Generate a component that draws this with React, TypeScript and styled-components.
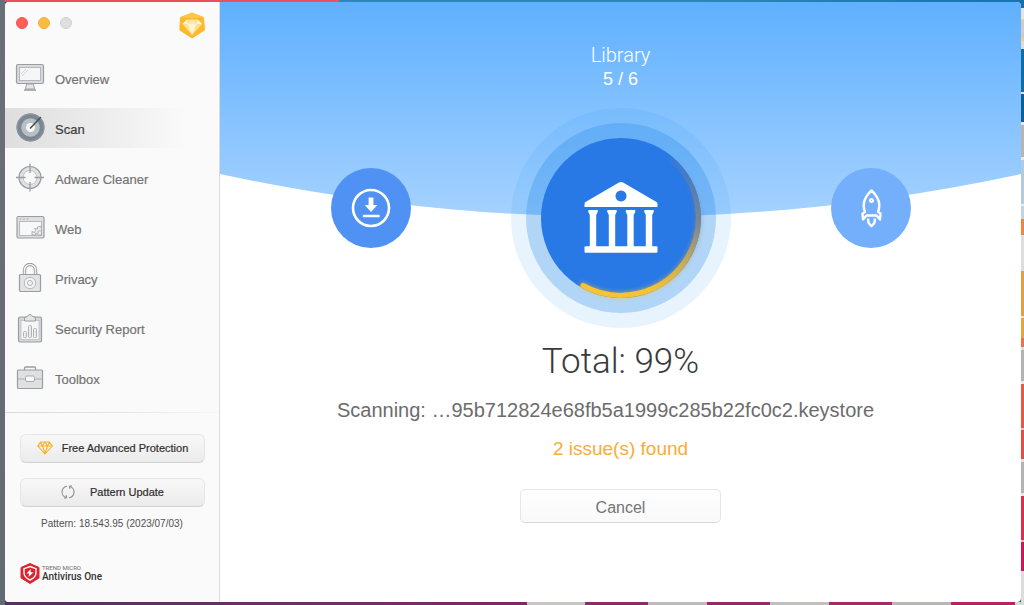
import React from "react";
import styled, { createGlobalStyle } from "styled-components";

const GlobalStyle = createGlobalStyle`
  *, *::before, *::after { box-sizing: border-box; }
  body { margin: 0; font-family: "Liberation Sans", Arial, sans-serif; }
  button { font-family: inherit; cursor: pointer; }
`;

const light = `font-family: Roboto, "Liberation Sans", sans-serif; font-weight: 300;`;

const Desktop = styled.div`
  min-height: 100vh;
  display: flex;
  padding: 2px 3px 3px 5px;
  background:
    linear-gradient(180deg,
      #0f72ad 0 8px, #e6e3e2 8px 19px, #f0cf7a 19px 21px, #cfcbca 21px 38px, #f0cf7a 38px 41px, #dedad9 41px 49px,
      #0f6ca5 49px 92px, #dce6ee 92px 94px, #0b5f98 94px 122px, #e8e8e8 122px 125px, #b7b4b2 125px 157px,
      #e8e8e8 157px 160px, #b5cadc 160px 204px, #e8eef2 204px 206px, #c4d3de 206px 219px, #e58a45 219px 235px,
      #dddddd 235px 271px, #e0a043 271px 316px, #f1e2c4 316px 318px, #e2a63e 318px 338px, #e8744a 338px 347px,
      #dedede 347px 350px, #b4b3b3 350px 381px, #e6e6e6 381px 384px, #e65a44 384px 428px, #f0c3bd 428px 430px,
      #e34e45 430px 459px, #e2e2e2 459px 462px, #b4b3b3 462px 493px, #e6e6e6 493px 496px, #dd2f4b 496px 540px,
      #efb9c9 540px 542px, #d01455 542px 571px, #dcdcdc 571px) right top / 3px 100% no-repeat,
    linear-gradient(180deg, #6a707a, #626a76) left top / 5px 100% no-repeat,
    linear-gradient(90deg, #ea4f5d 0 339px, #2f86b9 339px 700px, #1674ae 1000px) left top / 100% 2px no-repeat,
    linear-gradient(90deg,
      #563064 0, #6f2d6c 300px, #7d2a6b 527px, #c9c4c4 527px 585px, #8f2a68 585px 648px, #bcbaba 648px 707px,
      #97296a 707px 770px, #c2bfbf 770px 829px, #a82868 829px 892px, #b9b6b6 892px 951px, #b8245f 951px 1015px,
      #d8d8d8 1015px) left bottom / 100% 3px no-repeat,
    #563064;
`;

const AppWindow = styled.div`
  flex: 1;
  display: flex;
  min-width: 0;
  border-radius: 4px;
  overflow: hidden;
  background: #ffffff;
`;

const Sidebar = styled.aside`
  flex: 0 0 215px;
  display: flex;
  flex-direction: column;
  background: #fafafa;
  border-right: 1px solid #dcdcdc;
`;

const TitleBar = styled.header`
  display: flex;
  align-items: flex-start;
  justify-content: space-between;
  padding: 10px 14px 0 11px;
  height: 56px;
`;

const Lights = styled.div`
  display: flex;
  gap: 10px;
  padding-top: 5px;
`;

const Light = styled.button<{ $fill: string; $edge: string }>`
  width: 12px;
  height: 12px;
  padding: 0;
  border: 1px solid ${(p) => p.$edge};
  border-radius: 50%;
  background: ${(p) => p.$fill};
`;

const PlainButton = styled.button`
  display: flex;
  padding: 0;
  border: 0;
  background: none;
`;

const Nav = styled.nav`
  display: flex;
  flex-direction: column;
  gap: 10px;
`;

const NavItem = styled.a<{ $active?: boolean }>`
  display: flex;
  align-items: center;
  gap: 10px;
  height: 40px;
  padding-left: 10px;
  font-size: 13px;
  line-height: 16px;
  text-decoration: none;
  color: ${(p) => (p.$active ? "#3c3c3c" : "#747474")};
  background: ${(p) => (p.$active ? "linear-gradient(90deg, #dedede, #ececec 45%, #fafafa 85%)" : "none")};
`;

const NavLabel = styled.span`
  padding-top: 4px;
  -webkit-text-stroke: 0.2px currentColor;
`;

const Divider = styled.hr`
  width: 100%;
  height: 1px;
  margin: 14px 0 21px;
  border: 0;
  background: linear-gradient(90deg, #d8d8d8, #e6e6e6 60%, #f6f6f6);
`;

const SideActions = styled.div`
  display: flex;
  flex-direction: column;
  gap: 15px;
  padding: 0 14px 0 15px;
`;

const SideButton = styled.button<{ $gap: number }>`
  display: flex;
  align-items: center;
  justify-content: center;
  gap: ${(p) => p.$gap}px;
  height: 29px;
  padding: 0 0 2px;
  border: 1px solid #e6e6e6;
  border-bottom-color: #d2d2d2;
  border-radius: 6px;
  background: linear-gradient(180deg, #f8f8f8, #ebebeb);
  font-size: 11px;
  color: #2f2f2f;
  -webkit-text-stroke: 0.2px currentColor;
`;

const PatternInfo = styled.p`
  margin: 10px 0 0;
  text-align: center;
  font-size: 10px;
  line-height: 14px;
  color: #505050;
`;

const Brand = styled.div`
  display: flex;
  align-items: center;
  gap: 2px;
  padding: 32px 0 0 15px;
`;

const BrandText = styled.div`
  display: flex;
  flex-direction: column;
  font-family: Roboto, sans-serif;
`;

const BrandSmall = styled.span`
  font-size: 6px;
  line-height: 6px;
  color: #6c6c6c;
`;

const BrandName = styled.span`
  font-size: 10px;
  line-height: 12px;
  font-weight: 500;
  color: #333333;
`;

const Main = styled.main`
  flex: 1;
  min-width: 0;
  display: grid;
  grid-template-columns: minmax(0, 1fr);
  grid-template-rows: 1fr;
`;

const Wave = styled.svg`
  grid-area: 1 / 1;
  display: block;
  width: 100%;
  height: 216px;
`;

const Content = styled.div`
  grid-area: 1 / 1;
  z-index: 1;
  display: flex;
  flex-direction: column;
  align-items: center;
  padding-top: 40px;
`;

const Stage = styled.h1`
  ${light}
  margin: 0;
  font-size: 20px;
  line-height: 26px;
  color: #ffffff;
`;

const Step = styled.p`
  margin: 0;
  font-size: 18px;
  line-height: 22px;
  color: #ffffff;
`;

const StageRow = styled.div`
  display: flex;
  align-items: center;
  gap: 100px;
  margin-top: 18px;
`;

const SideStage = styled.svg`
  display: block;
  flex: none;
  width: 80px;
  height: 80px;
  margin-bottom: 20px;
`;

const Ring = styled.svg`
  display: block;
  flex: none;
  width: 220px;
  height: 220px;
`;

const Total = styled.h2`
  ${light}
  margin: 12px 0 0;
  font-size: 35px;
  line-height: 44px;
  color: #3a3a3a;
`;

const Scanning = styled.p`
  margin: 14px 0 0;
  padding-right: 30px;
  font-size: 20px;
  line-height: 24px;
  color: #6c6c6c;
`;

const Issues = styled.p`
  margin: 15px 0 0;
  font-size: 19px;
  line-height: 24px;
  color: #f7ad36;
`;

const CancelButton = styled.button`
  width: 201px;
  height: 34px;
  margin-top: 28px;
  padding: 3px 0 0;
  border: 1px solid #e6e6e6;
  border-bottom-color: #d8d8d8;
  border-radius: 5px;
  background: linear-gradient(180deg, #fefefe, #f9f9f9);
  font-size: 16px;
  color: #747474;
`;

const NavSvg = ({ children }: { children: React.ReactNode }) => (
  <svg width="30" height="30" viewBox="0 0 30 30" fill="none" stroke="#9a9da1" strokeWidth="1" aria-hidden="true">
    {children}
  </svg>
);

const OverviewIcon = () => (
  <NavSvg>
    <path d="M11.500 21h7l1 5h-9z" fill="#e4e4e6" stroke="#a2a4a8" />
    <path d="M9 27h12" strokeWidth="1.300" />
    <rect x="1.500" y="1.500" width="27" height="19" rx="1.500" fill="#d9dadd" strokeWidth="1.200" />
    <rect x="4.500" y="4.500" width="21" height="13" fill="#f6f6f6" stroke="#b4b6b9" />
    <path d="M6 11l5-5M7 13l6-6" stroke="#c4c6c8" strokeWidth="0.700" />
  </NavSvg>
);

const ScanIcon = () => (
  <NavSvg>
    <circle cx="15.500" cy="14.500" r="14" fill="#7d8791" stroke="none" />
    <circle cx="15.500" cy="14.500" r="13.300" stroke="#8b959e" strokeWidth="1.200" />
    <circle cx="15.500" cy="14.500" r="9.300" fill="#b8c0c6" stroke="none" />
    <circle cx="15.500" cy="14.500" r="4.500" fill="#f8f8f8" stroke="none" />
    <path d="M15.500 15L25.500 4.500" stroke="#47515b" strokeWidth="1.600" strokeLinecap="round" />
  </NavSvg>
);

const AdwareIcon = () => (
  <NavSvg>
    <circle cx="15" cy="14.500" r="9" stroke="#e0e1e4" strokeWidth="4" />
    <circle cx="15" cy="14.500" r="11" strokeWidth="1.200" />
    <circle cx="15" cy="14.500" r="7" fill="#f8f8f8" stroke="#b3b5b8" strokeWidth="0.800" />
    <path d="M15 .5v9.500M15 19v9.500M1 14.500h9.500M19.500 14.500h9.500" strokeWidth="1.300" />
  </NavSvg>
);

const WebIcon = () => (
  <NavSvg>
    <rect x="2" y="3.500" width="27" height="21.500" rx="1.500" fill="#dedfe1" strokeWidth="1.200" />
    <path d="M4.500 6h2M8 6h2M11.500 6h2" stroke="#a9abae" />
    <rect x="4.500" y="8.500" width="22" height="14" fill="#f8f8f8" stroke="#b4b6b9" strokeWidth="0.900" />
    <path d="M17 22v-3.500l2.500 1 1-2-1-2 3 .5v-2l3-1 1 3v6z" fill="#ececee" stroke="#a9abae" strokeWidth="0.900" />
    <path d="M20.500 22v-2l2.500.5v-2.500h3" stroke="#b4b6b9" strokeWidth="0.900" />
  </NavSvg>
);

const PrivacyIcon = () => (
  <NavSvg>
    <path d="M9.500 12V7a5.500 5.500 0 0 1 11 0V12" stroke="#93969a" strokeWidth="3.400" />
    <path d="M9.500 12V7a5.500 5.500 0 0 1 11 0V12" stroke="#f0f0f1" strokeWidth="1.600" />
    <rect x="4.500" y="11.500" width="21" height="17" rx="1" fill="#e2e3e5" strokeWidth="1.200" />
    <circle cx="15" cy="20" r="5.700" fill="#f4f4f4" stroke="#b6b8bb" />
    <circle cx="15" cy="20" r="2.500" stroke="#b0b2b5" />
  </NavSvg>
);

const ReportIcon = () => (
  <NavSvg>
    <rect x="3.500" y="4" width="23" height="25" rx="1.500" fill="#d6d7da" strokeWidth="1.200" />
    <rect x="6" y="7.500" width="18" height="19" fill="#f6f6f6" stroke="#b8babd" strokeWidth="0.700" />
    <path d="M9.500 8V4.500L12.500 3.500a2.600 2.600 0 0 1 5 0l3 1V8z" fill="#e4e4e6" />
    <rect x="8.500" y="18.500" width="3" height="6" rx="1" fill="#ececed" stroke="#b0b2b5" />
    <rect x="13.500" y="12.500" width="3" height="12" rx="1" fill="#ececed" stroke="#b0b2b5" />
    <rect x="18.500" y="15.500" width="3" height="9" rx="1" fill="#ececed" stroke="#b0b2b5" />
  </NavSvg>
);

const ToolboxIcon = () => (
  <NavSvg>
    <path d="M9.500 8V5a1 1 0 0 1 1-1h9a1 1 0 0 1 1 1V8" strokeWidth="1.300" />
    <rect x="2.500" y="7" width="25" height="18.500" rx="1" fill="#dfe0e2" strokeWidth="1.200" />
    <path d="M3 16h24" stroke="#aeb0b3" />
    <rect x="10.500" y="13" width="9" height="5.500" rx="1.500" fill="#f8f8f8" stroke="#a9abae" />
  </NavSvg>
);

const GemBadge = () => (
  <svg width="26" height="27" viewBox="0 0 26 27" aria-hidden="true">
    <path d="M13 1L24.500 5.500L25.500 18L13 26L.8 18L1.500 5.500z" fill="#fdb92c" stroke="#fdb92c" strokeLinejoin="round" />
    <path d="M1.500 5.500L13 1L24.500 5.500L13 6z" fill="#fdc846" />
    <path d="M8 7.500h10.500l4.500 4.500L13 23L3.500 12z" fill="#fee08f" />
    <path d="M8.500 12h9L13 23z" fill="#fff4d2" />
    <path d="M8 7.500L3.500 12h5zM18.500 7.500L23 12h-5.500z" fill="#fff7e0" />
    <path d="M8.500 12l4.500-4.500L17.500 12z" fill="#ffe9ae" />
  </svg>
);

const DiamondIcon = () => (
  <svg width="16" height="14" viewBox="0 0 16 14" fill="none" stroke="#f8b02b" strokeWidth="1.100" strokeLinejoin="round" aria-hidden="true">
    <path d="M3.500 1h9L15.300 5L8 13L.7 5zM.7 5h14.600M3.500 1l2 4L8 13l2.500-8 2-4M5.500 5L8 1l2.500 4" />
  </svg>
);

const RefreshIcon = () => (
  <svg width="14" height="14" viewBox="0 0 14 14" fill="none" stroke="#8f8f8f" strokeWidth="1.100" aria-hidden="true">
    <path d="M5.300 12.600A5.800 5.800 0 0 1 7 1.200l1.500.2M8.700 1.400A5.800 5.800 0 0 1 7 12.800" strokeDasharray="15.500 20" />
    <path d="M3.300 13.200l2.300-.6-.6-2.400M10.700 .8l-2.300.6.600 2.400" />
  </svg>
);

const ShieldLogo = () => (
  <svg width="20" height="21" viewBox="0 0 20 21" aria-hidden="true">
    <path d="M10 .5L19 4.500V15L10 20.500L1 15V4.500z" fill="#dc2430" stroke="#dc2430" strokeLinejoin="round" />
    <path d="M10 3.500l6 2.200v3.800c0 3.600-2.500 6-6 7.500-3.500-1.500-6-3.900-6-7.500V5.700z" fill="none" stroke="#fff" strokeWidth="1.400" />
    <path d="M10.800 6L6.500 10.500h2.700L8.500 14l5-4.800h-2.900z" fill="#fff" />
  </svg>
);

const LibraryRing = () => (
  <Ring viewBox="-110 -110 220 220" role="img" aria-label="Library scan progress">
    <defs>
      <linearGradient id="arc" gradientUnits="userSpaceOnUse" x1="60" y1="-64" x2="20" y2="70">
        <stop offset="0" stopColor="#7d7f80" stopOpacity="0" />
        <stop offset="0.450" stopColor="#85898a" stopOpacity="0.850" />
        <stop offset="0.750" stopColor="#cfac55" />
        <stop offset="1" stopColor="#f7c331" />
      </linearGradient>
      <filter id="glow" x="-20%" y="-20%" width="140%" height="140%">
        <feGaussianBlur stdDeviation="2" />
      </filter>
    </defs>
    <circle r="110" fill="#2290ee" fillOpacity="0.100" />
    <circle r="95" fill="#2084e8" fillOpacity="0.280" />
    <circle r="80" fill="#2879e6" />
    <g fill="none" stroke="url(#arc)" strokeLinecap="round">
      <path d="M49.500 -59.600A77.500 77.500 0 0 1 -38 67.500" strokeWidth="6" filter="url(#glow)" opacity="0.600" />
      <path d="M49.500 -59.600A77.500 77.500 0 0 1 -38 67.500" strokeWidth="5" />
    </g>
    <g fill="#fff">
      <path
        fillRule="evenodd"
        d="M-2.500 -35.300Q0 -36.500 2.500 -35.300L35.500 -16Q36.500 -15.300 36.500 -14V-11H-36.500V-14Q-36.500 -15.300 -35.500 -16zM0 -27.500a5.500 5.500 0 1 0 .01 0z"
      />
      {[-28, -9, 9.5, 28].map((x) => (
        <path key={x} transform={`translate(${x} 0)`} d="M-4.700 -8H4.700V-6L3.200 -3V29H-3.200V-3L-4.700 -6z" />
      ))}
      <rect x="-36.500" y="28.300" width="73" height="6.500" rx="1" />
    </g>
  </Ring>
);

const DownloadStage = () => (
  <SideStage viewBox="-40 -40 80 80" role="img" aria-label="Downloads">
    <circle r="40" fill="#4f92f3" />
    <circle r="18" fill="none" stroke="#fff" strokeWidth="2.600" />
    <path d="M-2.400 -10.500H2.400V-3H6.300L0 4L-6.300 -3H-2.400z" fill="#fff" />
    <path d="M-7 8H7.500" stroke="#fff" strokeWidth="2.600" strokeLinecap="round" />
  </SideStage>
);

const RocketStage = () => (
  <SideStage viewBox="-40 -40 80 80" role="img" aria-label="Startup">
    <circle r="40" fill="#73affa" />
    <g fill="none" stroke="#fff" strokeWidth="2.400" strokeLinejoin="round">
      <path d="M0.500 -17.500C-5 -12.500 -7.500 -7 -7.300 -2C-7.200 1 -6.500 2.500 -6 4L-8.500 5.500L-8 11.500L-4.500 7.500H5.500L9 11.500L9.500 5.500L7 4C7.500 2.500 8.200 1 8.300 -2C8.500 -7 6 -12.500 0.500 -17.500z" />
      <circle cx="0.500" cy="-7.500" r="1.500" strokeWidth="2" />
      <path d="M-2.500 10.500C-4 14 -2 16 0.500 18C3 16 5 14 3.500 10.500" />
    </g>
  </SideStage>
);

const navItems = [
  { label: "Overview", Icon: OverviewIcon },
  { label: "Scan", Icon: ScanIcon, active: true },
  { label: "Adware Cleaner", Icon: AdwareIcon },
  { label: "Web", Icon: WebIcon },
  { label: "Privacy", Icon: PrivacyIcon },
  { label: "Security Report", Icon: ReportIcon },
  { label: "Toolbox", Icon: ToolboxIcon },
];

export default function App() {
  return (
    <>
      <GlobalStyle />
      <Desktop>
        <AppWindow>
          <Sidebar>
            <TitleBar>
              <Lights>
                <Light $fill="#ff5f57" $edge="#f4544d" aria-label="Close" />
                <Light $fill="#ffbb3e" $edge="#f2b13c" aria-label="Minimize" />
                <Light $fill="#dfdfdf" $edge="#d0d0d0" aria-label="Zoom" />
              </Lights>
              <PlainButton aria-label="Premium">
                <GemBadge />
              </PlainButton>
            </TitleBar>
            <Nav>
              {navItems.map(({ label, Icon, active }) => (
                <NavItem key={label} href="#" $active={active} aria-current={active ? "page" : undefined}>
                  <Icon />
                  <NavLabel>{label}</NavLabel>
                </NavItem>
              ))}
            </Nav>
            <Divider />
            <SideActions>
              <SideButton $gap={9}>
                <DiamondIcon />
                Free Advanced Protection
              </SideButton>
              <SideButton $gap={15}>
                <RefreshIcon />
                Pattern Update
              </SideButton>
            </SideActions>
            <PatternInfo>Pattern: 18.543.95 (2023/07/03)</PatternInfo>
            <Brand>
              <ShieldLogo />
              <BrandText>
                <BrandSmall>TREND MICRO</BrandSmall>
                <BrandName>Antivirus One</BrandName>
              </BrandText>
            </Brand>
          </Sidebar>
          <Main>
            <Wave viewBox="0 0 800 216" preserveAspectRatio="none" aria-hidden="true">
              <defs>
                <linearGradient id="sky" x1="0" y1="0" x2="0" y2="1">
                  <stop offset="0" stopColor="#5fb0ff" />
                  <stop offset="1" stopColor="#a6d2ff" />
                </linearGradient>
              </defs>
              <path d="M0 0H800V172Q400 258 0 172z" fill="url(#sky)" />
            </Wave>
            <Content>
              <Stage>Library</Stage>
              <Step>5 / 6</Step>
              <StageRow>
                <DownloadStage />
                <LibraryRing />
                <RocketStage />
              </StageRow>
              <Total>Total: 99%</Total>
              <Scanning>Scanning: …95b712824e68fb5a1999c285b22fc0c2.keystore</Scanning>
              <Issues>2 issue(s) found</Issues>
              <CancelButton>Cancel</CancelButton>
            </Content>
          </Main>
        </AppWindow>
      </Desktop>
    </>
  );
}
